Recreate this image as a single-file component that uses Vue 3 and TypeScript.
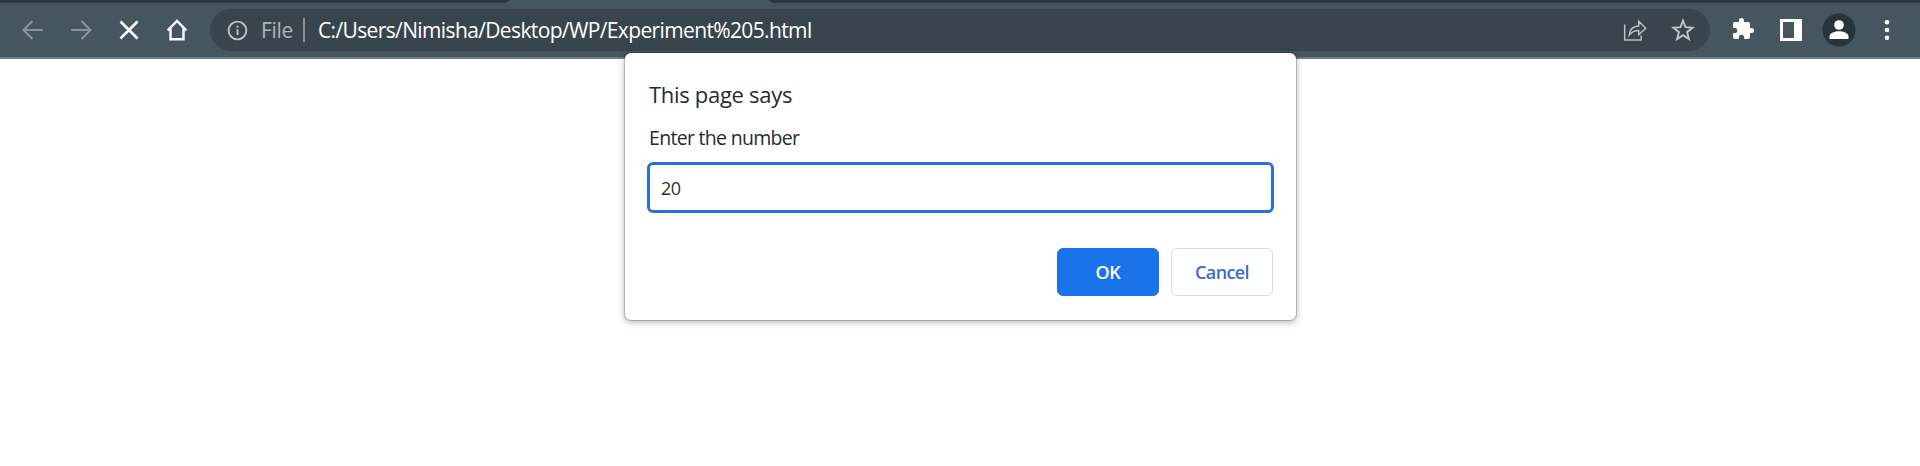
<script setup lang="ts">
import { ref } from 'vue'

const url = ref<string>('C:/Users/Nimisha/Desktop/WP/Experiment%205.html')
const answer = ref<string>('20')
</script>

<template>
  <div class="browser">
    <div class="tab-strip">
      <div class="tab-edge left"></div>
      <div class="tab-edge right"></div>
    </div>
    <header class="toolbar">
      <nav class="nav">
        <svg class="icon dim" viewBox="0 0 24 24"><path d="M21.8 12H3M11.5 3L2.5 12l9 9" /></svg>
        <svg class="icon dim" viewBox="0 0 24 24"><path d="M2.2 12H21M12.5 3l9 9-9 9" /></svg>
        <svg class="icon bright" viewBox="0 0 24 24"><path d="M3.5 3.5l17 17M20.5 3.5l-17 17" /></svg>
        <svg class="icon home" viewBox="0 0 24 24"><path d="M2.7 12.3L12 3l9.3 9.3M5.5 10.5v10.7h13V10.5" /></svg>
      </nav>
      <div class="omnibox">
        <svg class="info" viewBox="0 0 22 22">
          <circle cx="11" cy="11" r="9.3" />
          <path d="M11 9.8v6M11 6v2" />
        </svg>
        <span class="scheme">File</span>
        <span class="divider"></span>
        <span class="url">{{ url }}</span>
        <svg class="share" viewBox="0 0 24 24">
          <path d="M1.7 6.5v15.600h16.400v-4.500M6.300 17.200c.3-5.300 3.800-8.700 9.400-9.100V3.200l7 7-7 6.600v-4.400c-4.200 0-7 1.300-9.400 4.800z" />
        </svg>
        <svg class="star" viewBox="0 0 24 24">
          <path d="M12 2.700l2.500 6.500 7 .5-5.400 4.500 1.800 6.800-5.900-3.800-5.900 3.800 1.800-6.800L2.500 9.700l7-.5z" />
        </svg>
      </div>
      <div class="actions">
        <svg class="puzzle" viewBox="0 0 24 24">
          <path d="M20.500 11H19V7a2 2 0 0 0-2-2h-4V3.500a2.500 2.500 0 0 0-5 0V5H4a2 2 0 0 0-2 2v3.800h1.500a2.700 2.700 0 0 1 0 5.400H2V20a2 2 0 0 0 2 2h3.800v-1.500a2.700 2.700 0 0 1 5.400 0V22H17a2 2 0 0 0 2-2v-4h1.500a2.500 2.500 0 0 0 0-5z" />
        </svg>
        <span class="side-panel"></span>
        <svg class="avatar" viewBox="0 0 34 34">
          <circle class="disc" cx="17" cy="17" r="16.500" />
          <circle cx="17" cy="12" r="4.800" />
          <path d="M7.500 26v-2.500c0-3.700 5.500-5.200 9.500-5.200s9.500 1.500 9.500 5.200V26z" />
        </svg>
        <svg class="menu" viewBox="0 0 6 22">
          <circle cx="3" cy="3.300" r="2.300" />
          <circle cx="3" cy="11" r="2.300" />
          <circle cx="3" cy="18.700" r="2.300" />
        </svg>
      </div>
    </header>
    <main class="page">
      <section class="dialog" role="dialog">
        <h1>This page says</h1>
        <p>Enter the number</p>
        <input v-model="answer" class="field" type="text" />
        <div class="buttons">
          <button class="ok" type="button">OK</button>
          <button class="cancel" type="button">Cancel</button>
        </div>
      </section>
    </main>
  </div>
</template>

<style>
body {
  margin: 0;
  background: #fff;
}
</style>

<style scoped>
.browser {
  width: 1920px;
  height: 466px;
  overflow: hidden;
  background: #fff;
  font-family: "Open Sans", "Noto Sans", sans-serif;
}
.tab-strip {
  height: 3px;
  display: flex;
  justify-content: space-between;
  background: #46565f;
}
.tab-edge {
  height: 3px;
  background: #2b373d;
}
.left {
  width: 510px;
  clip-path: polygon(0 0, 100% 0, calc(100% - 5px) 100%, 0 100%);
}
.right {
  width: 1166px;
  clip-path: polygon(0 0, 100% 0, 100% 100%, 5px 100%);
}
.right {
  width: 1152px;
}
.toolbar {
  box-sizing: border-box;
  height: 56px;
  padding-top: 6px;
  border-bottom: 2px solid #707c83;
  background: #46565f;
  display: flex;
  align-items: flex-start;
}
.nav {
  box-sizing: border-box;
  width: 210px;
  height: 42px;
  padding-left: 21px;
  display: flex;
  align-items: center;
  gap: 24px;
}
svg {
  display: block;
  flex: none;
}
.icon {
  width: 24px;
  height: 24px;
  fill: none;
  stroke: #fff;
  stroke-width: 2.2;
}
.dim {
  stroke: #8b969c;
  stroke-width: 2;
}
.bright {
  stroke-width: 2.6;
}
.home {
  stroke-width: 2.4;
}
.omnibox {
  box-sizing: border-box;
  width: 1500px;
  height: 42px;
  padding: 0 15px 0 17px;
  border-radius: 21px;
  background: #39454c;
  display: flex;
  align-items: center;
}
.info {
  width: 21px;
  height: 21px;
  fill: none;
  stroke: #bdc3c6;
  stroke-width: 2;
}
.scheme {
  width: 42px;
  margin-left: 13px;
  color: #b0b6ba;
  font-size: 21px;
  line-height: 42px;
  letter-spacing: -0.3px;
}
.divider {
  width: 2px;
  height: 24px;
  background: #879197;
}
.url {
  margin-left: 13px;
  flex: 1;
  color: #fff;
  font-size: 21px;
  line-height: 42px;
  white-space: nowrap;
  letter-spacing: -0.63px;
}
.share {
  width: 24px;
  height: 24px;
  margin-right: 24px;
  fill: none;
  stroke: #b8bec2;
  stroke-width: 1.5;
}
.star {
  width: 24px;
  height: 24px;
  fill: none;
  stroke: #bfc5c8;
  stroke-width: 1.9;
}
.actions {
  height: 42px;
  flex: 1;
  display: flex;
  align-items: center;
}
.puzzle {
  width: 24px;
  height: 24px;
  margin: -2px 0 0 21px;
  fill: #fff;
}
.side-panel {
  box-sizing: border-box;
  width: 22px;
  height: 22px;
  margin-left: 25px;
  border: 3px solid #fff;
  border-right-width: 8px;
}
.avatar {
  width: 34px;
  height: 34px;
  margin-left: 20px;
  fill: #fff;
}
.disc {
  fill: #29343a;
}
.menu {
  width: 6px;
  height: 22px;
  margin-left: 28px;
  fill: #fff;
}
.page {
  height: 407px;
  display: flex;
  justify-content: center;
}
.dialog {
  position: relative;
  top: -6px;
  box-sizing: border-box;
  width: 671px;
  height: 267px;
  margin-left: 1px;
  padding: 25px 22px 0;
  border-radius: 6px;
  background: #fff;
  box-shadow: 0 0 0 1px rgba(0, 0, 0, 0.18), 0 2px 6px 1px rgba(0, 0, 0, 0.26);
}
h1,
p {
  margin: 0 0 0 2px;
  color: #292a2d;
  font-weight: 400;
  white-space: nowrap;
}
h1 {
  height: 36px;
  font-size: 22px;
  line-height: 32px;
  letter-spacing: -0.3px;
}
p {
  height: 48px;
  font-size: 19.5px;
  line-height: 48px;
  letter-spacing: -0.7px;
}
.field {
  display: block;
  box-sizing: border-box;
  width: 627px;
  height: 51px;
  padding: 0 11px;
  border: 3px solid #2a70d8;
  border-radius: 6px;
  outline: none;
  background: #fff;
  color: #303134;
  font: 18px "Open Sans", sans-serif;
  letter-spacing: -0.5px;
}
.buttons {
  display: flex;
  justify-content: flex-end;
  gap: 12px;
  margin: 35px 1px 0 0;
}
button {
  box-sizing: border-box;
  width: 102px;
  height: 48px;
  padding: 0;
  border: 1px solid #1a73e8;
  border-radius: 6px;
  font: 600 18px/44px "Open Sans", sans-serif;
}
.ok {
  background: #1a73e8;
  color: #fff;
  letter-spacing: -0.4px;
}
.cancel {
  border-color: #dadce0;
  background: #fff;
  color: #3b6bd0;
  letter-spacing: -0.6px;
}
</style>
